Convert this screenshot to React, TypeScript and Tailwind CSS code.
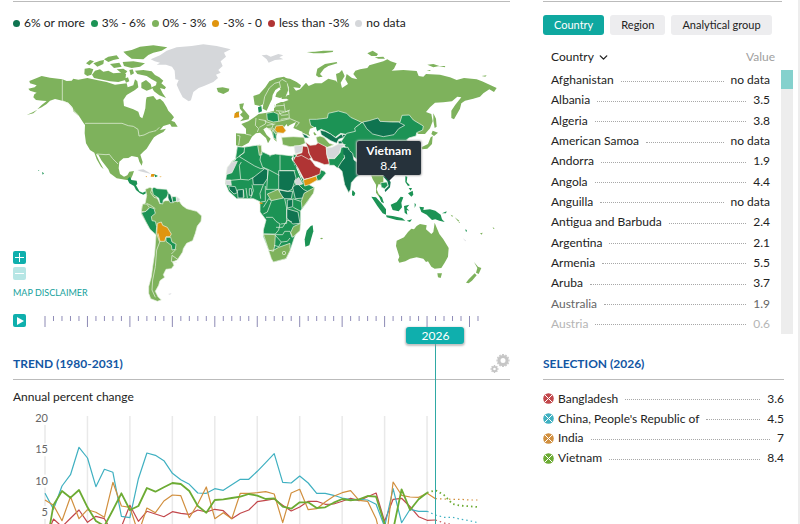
import React from "react";
import { ChevronDown } from "lucide-react";

const legend = [
  { label: "6% or more", dot: "bg-[#0f7450]" },
  { label: "3% - 6%", dot: "bg-[#1c9355]" },
  { label: "0% - 3%", dot: "bg-[#7eb25c]" },
  { label: "-3% - 0", dot: "bg-[#e0950f]" },
  { label: "less than -3%", dot: "bg-[#b03434]" },
  { label: "no data", dot: "bg-[#d5d7da]" },
];

const countries = [
  { name: "Afghanistan", value: "no data" },
  { name: "Albania", value: "3.5" },
  { name: "Algeria", value: "3.8" },
  { name: "American Samoa", value: "no data" },
  { name: "Andorra", value: "1.9" },
  { name: "Angola", value: "4.4" },
  { name: "Anguilla", value: "no data" },
  { name: "Antigua and Barbuda", value: "2.4" },
  { name: "Argentina", value: "2.1" },
  { name: "Armenia", value: "5.5" },
  { name: "Aruba", value: "3.7" },
  { name: "Australia", value: "1.9", tone: "text-[#666666]" },
  { name: "Austria", value: "0.6", tone: "text-[#b5b5b5]" },
];

const selection = [
  { name: "Bangladesh", value: "3.6", color: "#c2474b" },
  { name: "China, People's Republic of", value: "4.5", color: "#3fb0c1" },
  { name: "India", value: "7", color: "#d18f3e" },
  { name: "Vietnam", value: "8.4", color: "#6cab33" },
];

/* Heights of each yearly point, 1980-2031, in thirds of a pixel above the chart origin. */
const series = [
  {
    color: "#c2474b", width: 1.2, last: 46,
    y: [720, 657, 680, 655, 630, 667, 649, 656, 700, 680, 616, 664, 634, 642, 650, 635, 640, 643, 630, 636, 628, 632, 656, 640, 630, 605, 601, 597, 616, 633, 621, 604, 604, 613, 612, 604, 595, 602, 590, 579, 664, 598, 595, 620, 650, 661, 660, 669, 674, 676, 678, 680],
  },
  {
    color: "#3fb0c1", width: 1.2, last: 45,
    y: [580, 628, 558, 524, 442, 474, 560, 508, 517, 649, 653, 536, 459, 466, 482, 520, 539, 553, 579, 580, 566, 571, 554, 538, 538, 514, 488, 461, 547, 549, 528, 549, 580, 580, 586, 594, 599, 598, 600, 613, 680, 566, 668, 628, 634, 634, 645, 652, 652, 658, 662, 668],
  },
  {
    color: "#d18f3e", width: 1.2, last: 46,
    y: [600, 616, 662, 590, 656, 629, 637, 652, 547, 618, 622, 700, 624, 638, 603, 585, 587, 653, 612, 561, 656, 638, 656, 580, 580, 578, 575, 582, 668, 579, 568, 629, 626, 606, 589, 578, 572, 601, 604, 656, 760, 546, 586, 591, 592, 580, 596, 597, 598, 598, 600, 600],
  },
  {
    color: "#6cab33", width: 1.8, last: 45,
    y: [760, 615, 573, 593, 570, 622, 663, 678, 630, 580, 630, 618, 564, 575, 562, 549, 552, 573, 618, 638, 600, 598, 594, 590, 582, 587, 597, 595, 620, 626, 607, 607, 624, 622, 608, 597, 601, 598, 588, 590, 672, 690, 568, 630, 598, 578, 571, 585, 612, 617, 619, 621],
  },
];

const xAt = (i: number) => 32 + i * 8.49;
const points = (ys: number[], from: number, to: number) =>
  ys.slice(from, to + 1).map((y, k) => `${xAt(from + k).toFixed(1)},${(y / 3 - 112).toFixed(1)}`).join(" ");

const DARK = "#0f7450";
const MID = "#1c9355";
const LIGHT = "#7eb25c";
const ORANGE = "#e0950f";
const RED = "#b03434";
const NONE = "#d5d7da";

function WorldMap() {
  return (
    <svg viewBox="39 108 1491 804" className="block w-full" role="img" aria-label="World map of annual percent change" stroke="#e9f2e4" strokeWidth="2.1" strokeLinejoin="round">
      {/* North America */}
      <g fill={LIGHT}>
        <path stroke="none" d="M112 328L125 315L140 303L128 302L108 300L100 292L103 283L110 278L90 272L85 266L104 262L110 256L90 250L88 243L105 236L125 228L150 233L187 238L200 243L215 242L220 236L235 239L262 234L290 240L320 246L345 254L380 250L383 262L400 256L405 238L412 244L415 262L405 270L380 285L370 300L372 318L400 328L415 335L420 350L427 355L432 340L436 325L438 300L440 292L460 288L470 300L480 296L490 305L500 322L505 332L515 343L522 352L514 362L524 366L533 380L515 380L510 372L490 378L480 390L498 386L490 396L472 405L462 412L455 422L447 435L440 446L430 455L421 464L428 486L425 497L418 485L414 472L395 468L385 474L370 475L358 485L356 505L360 522L372 530L382 526L388 515L402 513L398 525L392 538L380 540L350 535L330 520L325 508L305 482L295 464L288 462L298 484L311 508L303 500L290 478L283 458L270 450L258 430L254 400L255 375L250 368L235 345L220 325L205 308L190 303L165 297L150 302L140 312L125 322Z" />
        <path stroke="none" d="M80 345L98 337L112 329L100 340ZM254 206L268 204L280 208L274 224L262 228L253 222ZM285 212L300 208L310 215L325 212L340 220L360 218L378 222L376 240L355 246L330 244L300 238L282 234L276 224ZM258 190L270 180L282 184L268 196ZM280 190L300 182L312 180L310 192L292 200ZM312 178L325 170L350 166L358 176L340 180L325 186ZM370 155L395 150L420 140L460 136L502 142L485 152L460 158L445 165L430 178L395 176L380 165ZM330 192L358 188L365 200L342 204ZM368 186L400 184L435 190L420 200L395 204L372 198ZM350 208L370 206L382 214L372 226ZM388 210L398 208L402 220L392 226ZM405 212L430 210L455 214L465 225L478 232L490 242L484 250L498 262L494 268L480 264L488 280L498 294L478 286L462 274L455 262L468 256L470 246L455 238L440 228L412 222ZM424 248L438 240L452 252L456 266L440 272L424 264ZM373 236L384 232L388 244L378 248ZM390 268L402 262L400 272ZM218 320L232 340L236 348L220 334Z" />
        <path fill="none" d="M187 238V302L205 310L220 330L234 346M255 370H366L385 377L400 379L414 388L417 408L432 405L448 397L460 394L468 392L478 382M290 462L318 464L328 463L338 476L354 492" />
      </g>
      {/* Greenland, Svalbard and other territories */}
      <g fill={NONE} stroke="none">
        <path d="M452 178L480 166L500 152L530 142L575 138L610 133L650 138L692 148L672 158L678 170L662 184L668 198L655 210L662 218L648 224L654 234L640 246L612 258L596 264L580 276L573 300L566 304L548 292L538 272L530 254L536 240L526 238L524 212L516 200L498 194L470 194L480 188L464 184ZM785 166L800 164L812 170L835 162L850 166L838 172L850 178L825 180L806 188L800 178ZM412 510L430 508L448 518L454 522L438 518L420 514ZM562 299L570 298L572 302L564 303ZM504 882L515 880L510 884Z" />
      </g>
      {/* Central America, Caribbean and Pacific islands */}
      <g stroke="none">
        <path fill={MID} d="M382 538L390 530L394 540L410 542L412 552L408 556L414 566L418 574L428 578L440 572L438 580L430 584L420 580L408 570L402 558L388 550ZM462 522L474 528L466 532ZM126 516L132 520L128 524ZM114 510L118 511L116 513Z" />
        <path fill={ORANGE} d="M454 522L463 522L462 530L452 530ZM478 529L485 530L482 532ZM436 529L441 529L441 532Z" />
      </g>
      {/* South America */}
      <g transform="translate(0 300)">
        <path fill={LIGHT} d="M436 268L450 262L458 266L470 290L480 312L495 302L520 302L538 304L546 316L560 326L590 334L605 348L603 364L592 378L586 400L578 422L560 430L550 446L548 456L532 480L518 486L522 496L514 506L498 508L490 524L494 532L480 542L476 556L466 574L474 590L484 600L472 604L452 596L446 580L446 560L454 530L458 500L464 460L468 405L450 388L440 370L424 342L426 318L436 308L440 286Z" />
        <path fill={MID} d="M456 266L462 262L472 266L500 268L506 280L500 292L490 300L488 312L480 310L476 294L460 284Z" />
        <path fill={DARK} d="M504 278L512 284L516 296L520 308L510 308L504 294Z" />
        <path fill={MID} d="M516 290L528 290L530 304L518 306Z" />
        <path fill={NONE} d="M530 290L540 298L534 306L529 304Z" />
        <path fill={LIGHT} d="M428 312L440 312L448 322L436 336L424 334Z" />
        <path fill={MID} d="M424 338L438 334L450 322L462 326L466 340L454 350L456 362L466 364L470 380L468 404L450 388L438 366Z" />
        <path fill={ORANGE} d="M472 370L484 366L488 376L502 382L514 402L510 410L498 410L494 424L478 424L470 400Z" />
        <path fill={MID} d="M498 412L512 412L516 426L528 432L526 448L516 450L514 436L498 424Z" />
        <path fill="none" d="M474 400L480 424L470 450L466 500L458 540L456 570L466 592M516 466L536 480M514 462L528 448M516 466L514 484L530 488M456 266L452 278L462 292L476 296M440 310L452 316L466 326" />
      </g>
      {/* Russia and Europe */}
      <g>
        <path fill={LIGHT} stroke="none" d="M852 234L870 236L890 246L903 256L900 264L880 262L888 272L900 268L918 248L926 258L945 250L965 250L985 236L1008 242L1012 248L1008 222L1018 218L1026 210L1034 228L1022 248L1026 264L1044 252L1036 238L1040 222L1056 234L1072 238L1060 222L1066 212L1080 208L1102 204L1108 196L1150 184L1162 178L1172 184L1190 190L1182 206L1175 212L1210 210L1250 213L1256 228L1270 230L1278 222L1320 224L1350 232L1370 240L1392 234L1430 238L1446 244L1464 252L1490 264L1482 276L1468 268L1450 280L1440 290L1420 296L1395 302L1384 310L1380 326L1362 358L1354 354L1354 332L1366 314L1384 292L1372 290L1356 304L1330 307L1305 308L1290 322L1278 336L1294 342L1298 364L1290 385L1275 402L1256 402L1245 395L1200 380L1100 380L1000 370L950 372L940 392L950 405L930 408L905 397L882 392L862 378L860 372L850 384L838 392L832 400L828 412L830 425L822 418L814 392L800 382L790 388L800 405L812 416L804 430L798 414L780 398L768 400L756 410L746 428L724 440L708 436L708 400L738 402L738 386L724 372L745 364L765 350L776 342L800 338L822 332L822 315L845 305L845 290L868 284L866 262Z" />
        <path fill={LIGHT} d="M760 288L778 282L796 262L808 244L830 234L852 230L868 240L862 252L866 270L858 288L840 294L826 290L830 278L842 268L838 262L826 270L818 285L816 298L810 310L800 332L788 326L790 312L780 318L764 314Z" stroke="none" />
        <path fill="none" d="M790 312L794 290L808 264L824 250L838 246L842 264M838 246L846 238L860 246M862 250L866 270L858 290" />
        <path fill="#fff" stroke="none" d="M850 306L830 306L826 322L822 324L824 306L832 298L860 296L866 300ZM868 376L888 366L880 384L908 396L900 406L872 406L856 400L852 392Z" />
        <path fill={LIGHT} stroke="none" d="M718 312L732 310L728 324L736 334L748 348L746 358L720 364L730 354L720 344L728 336L720 326ZM708 336L718 334L716 344L706 344ZM650 264L668 262L688 266L686 274L670 282L654 276ZM948 226L952 206L975 192L1010 186L1012 190L985 198L972 206L960 222L968 230L956 232ZM920 156L945 155L970 152L1000 152L998 156L970 160L940 160ZM1102 160L1118 152L1134 162L1130 168L1114 168ZM1124 172L1150 170L1155 176L1135 176ZM1282 194L1300 192L1318 198L1300 202ZM1316 198L1336 198L1334 202ZM1445 228L1460 226L1456 230ZM1280 210L1292 210L1290 213ZM1300 340L1308 356L1310 380L1304 384L1300 362ZM1298 392L1314 398L1302 408L1294 402ZM1298 408L1296 432L1282 446L1266 448L1264 442L1284 432L1292 412Z" />
        <g transform="translate(630 150)">
          <path fill={ORANGE} stroke="none" d="M74 190L86 186L88 202L72 204Z" />
          <path fill={MID} d="M144 172L154 168L156 184L146 188Z" stroke="none" />
          <path fill={MID} d="M170 190L190 186L204 192L206 214L190 216L172 210Z" />
          <path fill={ORANGE} d="M198 228L218 226L228 242L220 250L202 248L194 240Z" />
          <path fill={LIGHT} d="M215 262L250 260L282 262L286 280L266 288L240 290L218 284Z" />
          <path fill="none" d="M82 256L90 258L86 286M106 252L124 256M138 204L136 226L146 236L142 246M146 208L168 212L166 222L148 232M164 214L190 222L186 234L164 238M196 168L222 166M198 182L222 184M206 192L236 182L238 204L212 208M206 214L240 206L268 218L258 230M170 226L196 222M174 240L192 236L190 262M192 250L212 250L214 262M206 184L214 196L234 194M222 160L226 186L240 180" />
          <path fill={MID} d="M188 240L198 254L200 270L190 262Z" />
          <path fill={DARK} d="M276 250L290 256L298 264L284 264Z" />
          {/* Central Asia */}
          <path fill={MID} d="M298 208L320 208L352 204L355 190L385 183L410 190L422 202L444 212L456 218L440 230L436 250L412 254L392 250L376 262L352 246L334 238L322 244L312 232L302 226Z" />
          <path fill={LIGHT} d="M318 262L330 258L342 262L358 280L372 284L352 292L324 284Z" />
          <path fill={DARK} d="M330 240L346 244L362 252L378 264L394 252L402 262L386 268L380 280L362 272L346 262L334 254Z" />
          <path fill={DARK} d="M396 254L436 252L410 270L384 274L386 282L408 280L404 268Z" />
          <path fill="#fff" stroke="none" d="M300 236L318 230L320 242L310 248L316 262L320 284L304 282L302 262L296 250Z" />
        </g>
      </g>
      {/* China and Mongolia */}
      <path fill={MID} d="M1085 368L1110 366L1200 366L1206 346L1228 345L1240 360L1270 378L1268 390L1250 398L1248 408L1226 414L1220 420L1250 440L1255 500L1220 525L1150 520L1100 500L1060 470L1044 452L1024 424L1040 400L1066 394L1064 384Z" />
      <path fill={DARK} d="M1088 366L1108 362L1134 354L1140 364L1175 366L1195 366L1214 376L1196 386L1182 404L1150 410L1118 402L1100 386Z" />
      {/* Africa, the Middle East and South Asia */}
      <g transform="translate(630 390)">
        <path fill={MID} d="M82 50L100 52L150 44L154 64L180 76L196 72L250 78L262 112L274 140L290 160L312 172L312 184L292 216L272 242L272 284L254 320L240 362L228 386L190 396L180 370L160 320L160 300L168 270L150 246L150 215L130 206L80 206L56 184L46 160L50 130L64 96L76 90Z" />
        <path fill={MID} d="M82 50L104 52L102 68L86 80L66 94L76 90L78 76Z" />
        <path fill={NONE} d="M66 96L82 94L66 128L48 134L52 112ZM46 150L62 150L64 166L48 164Z" />
        <path fill={DARK} d="M56 168L76 170L82 188L72 192L58 178ZM82 180L100 178L100 204L84 204ZM118 176L124 176L126 196L118 196ZM128 144L164 116L174 120L172 146L160 164L130 164ZM206 122L252 122L258 144L246 178L234 184L206 178ZM208 180L232 184L248 184L244 206L224 206L210 196ZM248 172L262 160L280 178L296 186L280 204L256 206ZM232 210L248 208L248 230L232 234ZM230 236L264 246L270 280L248 282L230 264Z" />
        <path fill={LIGHT} d="M143 46L154 46L156 74L148 76ZM172 192L204 178L220 204L184 212ZM282 190L314 172L310 190L276 236L274 214ZM250 290L272 280L270 302L248 322L242 308ZM160 312L196 314L194 348L190 364L176 360ZM176 362L192 360L206 352L240 340L240 362L228 386L190 396L184 386Z" />
        <path fill={NONE} d="M254 152L266 142L278 162L270 164L258 164Z" />
        <path fill={ORANGE} stroke="none" d="M149 217L158 218L157 222L149 221Z" />
        <path fill="none" d="M88 80L134 108L152 116L164 114M94 96L88 106L92 148L52 152M92 148L116 150L130 142M154 66L150 90L158 112L174 118L208 136M210 76V122H256M180 80V76M174 120L170 180M170 178L206 178M126 164L130 182L122 204M100 180L102 202M108 174L112 204M160 164L150 190L152 206M166 168L166 214L152 216M160 232L176 206L184 212M184 214L172 246L160 252M168 262H188L198 274L210 282L206 300L196 312H160M224 206L230 234L230 280L212 282M248 206L272 214M250 232L272 244M198 292L218 292L232 270L246 276M196 314L218 314L224 304L240 304L246 322M192 346L206 350L214 336L196 316M214 336L232 334L240 324M104 66L86 80" />
        <path fill={LIGHT} stroke="none" d="M236 354a3 3 0 1 0 .1 0" />
        <path fill="none" d="M222 364a5 5 0 1 1 -.1 10a5 5 0 0 1 .1 -10" />
        <path fill={MID} d="M290 302L302 288L308 286L310 304L298 346L286 350L284 328Z" stroke="none" />
        {/* Arabian peninsula and Iran */}
        <path fill="#fff" stroke="none" d="M248 78L252 104L262 114L282 164L274 150L258 112L244 86Z" />
        <path fill={NONE} d="M252 48L278 46L276 66L256 72Z" />
        <path fill={MID} d="M250 74L258 74L258 82L250 84ZM316 142L334 120L344 124L348 130L332 150L320 152Z" />
        <path fill={RED} d="M256 80L274 72L296 84L306 94L316 108L332 116L330 132L300 144L282 148L264 114L250 92Z" />
        <path fill={RED} d="M276 68L278 48L294 50L296 68L304 84L296 88L274 76L262 80L258 74Z" />
        <path fill={RED} d="M286 36L300 46L318 44L324 38L348 50L352 82L360 102L344 104L324 96L310 92L298 72L294 54Z" />
        <path fill={ORANGE} d="M280 150L300 144L318 138L322 150L298 164L284 168Z" />
        <path fill={NONE} d="M350 54L366 52L386 42L406 44L392 54L388 70L372 86L354 84L350 72Z" />
        <path fill={MID} d="M356 86L374 86L390 68L394 52L414 52L420 66L402 84L392 108L382 114L372 106L358 106Z" />
        <path fill={DARK} d="M394 96L404 84L402 72L416 60L428 70L432 90L446 100L462 104V120L456 132L438 142L424 158L422 178L416 188L404 164L396 124L384 112Z" />
        <path fill={DARK} stroke="none" d="M400 52L420 62L414 78L400 74Z" />
        <path fill={MID} stroke="none" d="M428 180L436 190L432 198L426 194Z" />
        <path fill={LIGHT} stroke="none" d="M330 325L336 323L339 326L334 328Z" />
      </g>
      {/* South-East Asia and Oceania */}
      <g transform="translate(1020 480)" stroke="none">
        <path fill={LIGHT} d="M92 42L130 42L130 66L122 74L116 72L110 88L116 102L124 110L118 112L108 98L108 74L98 58Z" />
        <path fill={MID} stroke="#e9f2e4" strokeWidth="2" d="M122 68L140 66L144 76L134 86L124 82Z" />
        <path fill={DARK} d="M128 48L140 50L152 66L150 82L136 96L134 90L146 78L142 64Z" />
        <path fill={MID} d="M116 106L126 112L132 130L124 126ZM94 110L108 112L126 132L138 148L138 164L128 160L112 138ZM138 166L158 168L186 174L196 182L170 180L140 172ZM152 134L170 126L182 110L190 112L184 128L186 142L176 154L158 150ZM192 138L208 134L200 144L208 152L200 150L202 164L194 158ZM196 48L202 50L200 66L210 76L204 78L196 66ZM204 100L218 92L220 104L214 110ZM206 84L216 84L212 92ZM238 140L252 142L250 150L270 148L286 152L302 164L306 178L314 186L298 182L286 178L276 180L260 164L244 156ZM224 128L228 134L224 144ZM200 182L216 178L210 186ZM306 160L320 154L318 160ZM37 92L44 98L42 108L36 106ZM376 208L380 210L381 215L377 214Z" />
        <path fill={LIGHT} d="M170 242L192 232L204 216L214 206L222 208L230 198L240 192L260 196L258 208L274 222L280 216L284 188L292 208L298 222L310 238L326 264L324 290L314 308L304 324L284 326L274 320L264 304L258 306L250 296L230 292L210 296L196 304L178 308L174 300L178 290L168 258ZM292 340L306 340L302 354L294 352ZM402 306L414 320L424 324L416 342L408 338L412 324ZM404 340L410 346L396 362L386 370L378 368L386 358ZM332 164L340 168L336 170ZM344 172L358 182L354 184ZM354 184L360 187L358 189ZM420 220L428 218L425 224ZM458 202L464 205L460 207Z" />
        <path fill={NONE} d="M368 234L378 242L376 244Z" />
      </g>
    </svg>
  );
}

function SectionTitle({ children }: { children: React.ReactNode }) {
  return <h2 className="text-[12px] leading-[20px] font-bold text-[#1256a3]">{children}</h2>;
}

function Gears() {
  const teeth = (n: number) => Array.from({ length: n }, (_, i) => (i * 360) / n);
  return (
    <svg width="20" height="20" viewBox="0 0 20 20" fill="none" stroke="#c6c6c6" aria-hidden="true">
      <circle cx="13" cy="6.5" r="4" strokeWidth="3" />
      {teeth(12).map((a) => <path key={a} d="M13 1.2V0" strokeWidth="1.8" transform={`rotate(${a} 13 6.5)`} />)}
      <circle cx="4.5" cy="15" r="2.2" strokeWidth="1.8" />
      {teeth(8).map((a) => <path key={a} d="M4.500 12.200V11" strokeWidth="1.400" transform={`rotate(${a} 4.5 15)`} />)}
    </svg>
  );
}

function Leader() {
  return <span className="mt-[2px] block w-full border-t border-dotted border-[#a8a8a8]" />;
}

export default function App() {
  return (
    <main className="flex h-screen overflow-hidden bg-white pl-[13px] font-['Lato',sans-serif] text-[#222222]">
      <div className="mr-[33px] min-w-0 flex-1 pt-px">
        <div className="border-t border-[#bbbbbb]" />
        <ul className="flex h-[34px] items-center gap-[6px] pt-2 text-[12px] whitespace-nowrap">
          {legend.map((l) => (
            <li key={l.label} className="flex items-center gap-1">
              <span className={`size-[7px] rounded-full ${l.dot}`} />
              {l.label}
            </li>
          ))}
        </ul>

        <section className="relative">
          <WorldMap />
          <div className="absolute bottom-[4px] left-0 flex flex-col items-start">
            <button aria-label="Zoom in" className="mb-[3px] grid size-[13px] place-items-center rounded-[2px] bg-[#0fafad]">
              <svg width="9" height="9" viewBox="0 0 9 9" stroke="#fff" strokeWidth="1"><path d="M4.500 0V9M0 4.500H9" /></svg>
            </button>
            <button aria-label="Zoom out" className="mb-[6px] grid size-[13px] place-items-center rounded-[2px] bg-[#b7e6e5]">
              <svg width="9" height="9" viewBox="0 0 9 9" stroke="#fff" strokeWidth="1"><path d="M0 4.500H9" /></svg>
            </button>
            <a href="#disclaimer" className="text-[9px] leading-[14px] text-[#159f9c]">MAP DISCLAIMER</a>
          </div>
          <div role="tooltip" className="absolute top-[39%] left-[75.6%] h-[34px] w-[64px] -translate-x-1/2 rounded-[2px] bg-[#26323b] pt-[2px] text-center text-[12px] leading-[15px] text-white shadow-[0_0_2px_1px_#bbbbbb]">
            <b className="block">Vietnam</b>
            <span className="block">8.4</span>
            <svg className="absolute top-full left-1/2 -translate-x-1/2" width="12" height="6" viewBox="0 0 12 6"><path d="M0 0H12L6 6Z" fill="#26323b" /></svg>
          </div>
        </section>

        <section className="relative">
          <div className="absolute top-[40px] bottom-0 left-[85%] z-10 w-px bg-[#2fa9a4]" />
          <div className="relative h-[50px] pt-[10px]">
            <button aria-label="Play" className="absolute top-[10px] left-0 grid size-[13px] place-items-center rounded-[2px] bg-[#0fafad]">
              <svg width="8" height="8" viewBox="0 0 8 8"><path d="M1 0L8 4L1 8Z" fill="#fff" /></svg>
            </button>
            <svg viewBox="0 0 497 16" className="block w-full" aria-hidden="true">
              {Array.from({ length: 52 }, (_, i) => (
                <path key={i} d={`M${xAt(i)} 2V${i % 5 === 0 ? 13 : 7}`} stroke={i % 5 === 0 ? "#8d8ab4" : "#8f8cb8"} strokeWidth="1" />
              ))}
            </svg>
            <button className="absolute top-[23px] left-[85%] z-20 h-[17px] w-[58px] -translate-x-1/2 rounded-[3px] bg-[#0fafad] text-[12px] leading-[17px] text-white shadow-[0_1px_2px_1px_#99999999]">2026</button>
          </div>

          <div className="flex h-[26px] items-start justify-between border-b border-[#bbbbbb]">
            <SectionTitle>TREND (1980-2031)</SectionTitle>
            <button aria-label="Chart settings"><Gears /></button>
          </div>
          <p className="pt-[8px] text-[12px] leading-[18px]">Annual percent change</p>
          <svg viewBox="0 0 497 124" className="mt-[6px] block w-full" role="img" aria-label="Annual percent change by year">
            {Array.from({ length: 10 }, (_, i) => (
              <path key={i} d={`M${xAt(i * 5)} 4V124`} stroke="#e9e9e9" strokeWidth="1.5" />
            ))}
            {[20, 15, 10, 5].map((v, i) => (
              <g key={v}>
                <rect x="22" y={i * 31.3} width="14" height="13" fill="#fff" />
                <text x="35" y={10 + i * 31.3} textAnchor="end" className="fill-[#666666] text-[11px]">{v}</text>
              </g>
            ))}
            {series.map((s) => (
              <g key={s.color} fill="none" stroke={s.color} strokeWidth={s.width} strokeLinejoin="round">
                <polyline points={points(s.y, 0, s.last)} />
                <polyline points={points(s.y, s.last, 51)} strokeDasharray="1.5 3" />
              </g>
            ))}
          </svg>
        </section>
      </div>

      <aside className="w-[257px] shrink-0 border-r-2 border-[#ededed] pt-px">
        <div className="mr-[16px] border-t border-[#bbbbbb]" />
        <div className="mt-[13px] flex gap-[6px] text-[11px]">
          <button className="h-5 rounded-[3px] bg-[#0fa8a0] px-[11px] text-white">Country</button>
          <button className="h-5 rounded-[3px] bg-[#ededef] px-[11px]">Region</button>
          <button className="h-5 rounded-[3px] bg-[#ededef] px-[11px]">Analytical group</button>
        </div>
        <div className="flex h-[299px] pl-2">
          <table className="block w-[219px] text-[12px]">
            <thead className="block">
              <tr className="flex h-[35px] items-center justify-between pt-[9px]">
                <th className="flex items-center gap-[3px] font-normal">Country <ChevronDown size={13} strokeWidth={2.5} /></th>
                <th className="-mr-[5px] font-normal text-[#a0a0a0]">Value</th>
              </tr>
            </thead>
            <tbody className="grid h-[264px] auto-rows-fr">
              {countries.map((c) => (
                <tr key={c.name} className={`flex items-center ${c.tone ?? ""}`}>
                  <td>{c.name}</td>
                  <td className="mx-[7px] flex-1"><Leader /></td>
                  <td>{c.value}</td>
                </tr>
              ))}
            </tbody>
          </table>
          <div className="mt-[35px] ml-[11px] w-[12px] bg-[#ededed]">
            <div className="h-[19px] bg-[#85d1cd]" />
          </div>
        </div>
        <div className="mt-[20px] mr-[14px] h-[26px] border-b border-[#bbbbbb]">
          <SectionTitle>SELECTION (2026)</SectionTitle>
        </div>
        <table className="mt-[9px] mr-[14px] block text-[12px]">
          <tbody className="grid h-[79px] auto-rows-fr">
            {selection.map((s) => (
              <tr key={s.name} className="flex items-center">
                <td className="mr-1">
                  <button aria-label={`Remove ${s.name}`} className="block">
                    <svg width="11" height="11" viewBox="0 0 11 11">
                      <circle cx="5.5" cy="5.5" r="5.3" fill={s.color} />
                      <path d="M2 2L9 9M9 2L2 9" stroke="#fff" strokeWidth="1" />
                    </svg>
                  </button>
                </td>
                <td>{s.name}</td>
                <td className="mx-[7px] flex-1"><Leader /></td>
                <td>{s.value}</td>
              </tr>
            ))}
          </tbody>
        </table>
      </aside>
    </main>
  );
}
